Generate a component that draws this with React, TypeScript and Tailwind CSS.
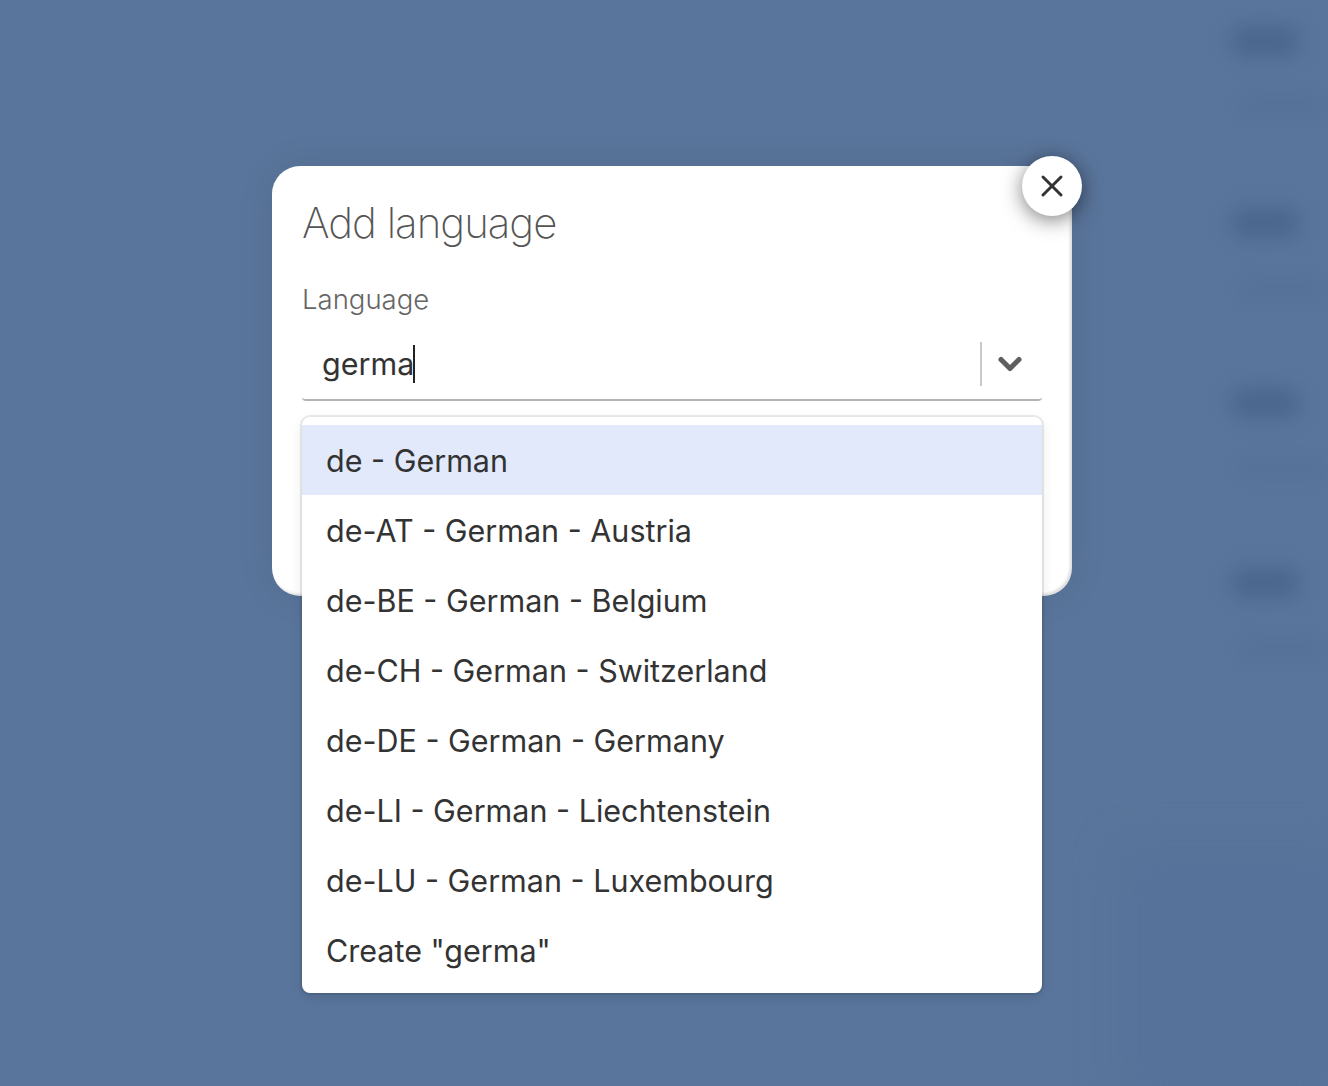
import { ChevronDown, X } from "lucide-react";

const options = [
  "de - German",
  "de-AT - German - Austria",
  "de-BE - German - Belgium",
  "de-CH - German - Switzerland",
  "de-DE - German - Germany",
  "de-LI - German - Liechtenstein",
  "de-LU - German - Luxembourg",
  'Create "germa"',
];

// the blurred page behind the overlay, only visible as soft dark smudges
const smudgeTops = ["top-[26px]", "top-[208px]", "top-[388px]", "top-[568px]"];
const smudgeSubTops = ["top-[96px]", "top-[280px]", "top-[460px]", "top-[640px]"];

export default function App() {
  return (
    <div className="relative h-[1086px] w-full overflow-hidden bg-[#5a759b] font-['Inter',sans-serif]">
      {smudgeTops.map((top) => (
        <div key={top} className={`absolute left-[1230px] h-[30px] w-[70px] rounded-full bg-[#4a668c] blur-[10px] ${top}`} />
      ))}
      {smudgeSubTops.map((top) => (
        <div key={top} className={`absolute left-[1236px] h-[18px] w-[92px] rounded-full bg-[#526e95] opacity-60 blur-[10px] ${top}`} />
      ))}
      <div className="absolute bottom-[-20px] left-[1120px] right-[-20px] top-[850px] bg-[#56729a] blur-[20px]" />

      <div className="flex justify-center pl-[16px] pt-[166px]">
        <div className="relative h-[430px] w-[800px] rounded-[28px] bg-white px-[30px] pt-[32px] shadow-[inset_-2px_-2px_3px_rgba(0,0,0,0.14),0_0_40px_rgba(0,0,0,0.07)]">
          <button className="absolute right-[-10px] top-[-10px] flex h-[60px] w-[60px] items-center justify-center rounded-full bg-white text-[#333333] shadow-[0_4px_20px_rgba(0,0,0,0.5)]">
            <X size={36} strokeWidth={2} />
          </button>

          <h2 className="text-[42px] font-extralight leading-[50px] tracking-[-1px] text-[#555555]">Add language</h2>
          <div className="mt-[33px] text-[27.5px] font-light leading-[36px] text-[#666666]">Language</div>

          <div className="relative mt-[11px]">
            <div className="flex h-[73px] items-center rounded-b-[4px] border-b-2 border-[#b3b3b3]">
              <div className="flex flex-1 items-center pl-[20px] text-[30.5px] leading-[44px] text-[#333333]">
                germa
                <span className="ml-[-1px] h-[38px] w-[2px] bg-[#222222]" />
              </div>
              <div className="h-[44px] w-[2px] bg-[#c9c9c9]" />
              <div className="flex w-[60px] items-center justify-center pr-[4px] text-[#5f5f5f]">
                <ChevronDown size={36} strokeWidth={3.4} />
              </div>
            </div>

            <div className="absolute left-0 right-0 top-[89px] z-10 rounded-[8px] bg-white py-[8px] shadow-[0_0_0_2px_rgba(0,0,0,0.08),0_4px_12px_rgba(0,0,0,0.1)]">
              {options.map((option, i) => (
                <div
                  key={option}
                  className={`flex h-[70px] items-center px-[24px] pt-[2px] text-[30.5px] text-[#333333] ${i === 0 ? "bg-[#e1e9fb] text-[#2f3542]" : ""}`}
                >
                  {option}
                </div>
              ))}
            </div>
          </div>
        </div>
      </div>
    </div>
  );
}
